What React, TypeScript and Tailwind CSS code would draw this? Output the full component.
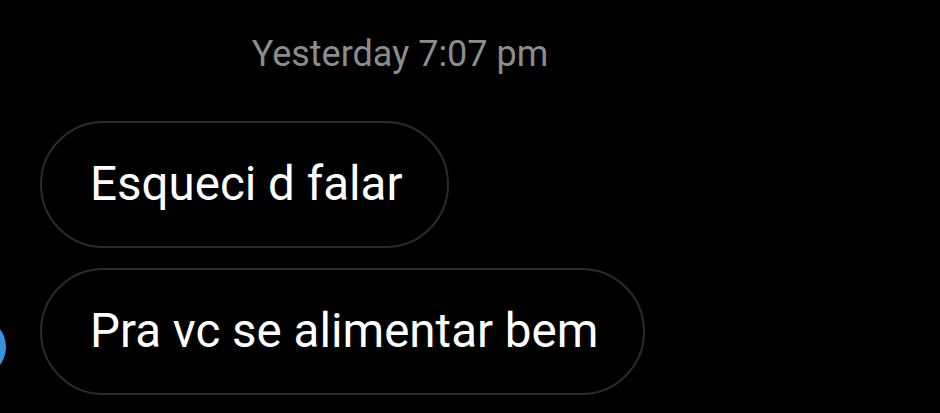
export default function App() {
  return (
    <div className="relative w-[940px] h-[413px] overflow-hidden bg-black font-['Roboto',sans-serif]">
      {/* contact avatar, mostly cut off at the edge */}
      <div className="absolute left-[-54px] top-[317px] w-[60px] h-[60px] rounded-full bg-[#3f8fd8]" />

      <div className="flex flex-col pt-[32px]">
        <div className="text-center text-[36px] leading-[44px] text-[#8c8c8c] pr-[140px]">
          Yesterday 7:07 pm
        </div>

        <div className="flex flex-col items-start gap-[20px] pl-[40px] mt-[45px]">
          <div className="h-[127px] flex items-center pl-[48px] pr-[45px] rounded-full border-2 border-[#2b2b2b] text-[47.5px] text-white">
            Esqueci d falar
          </div>
          <div className="h-[127px] flex items-center pl-[48px] pr-[45px] rounded-full border-2 border-[#2b2b2b] text-[47.5px] text-white">
            Pra vc se alimentar bem
          </div>
        </div>
      </div>
    </div>
  );
}
